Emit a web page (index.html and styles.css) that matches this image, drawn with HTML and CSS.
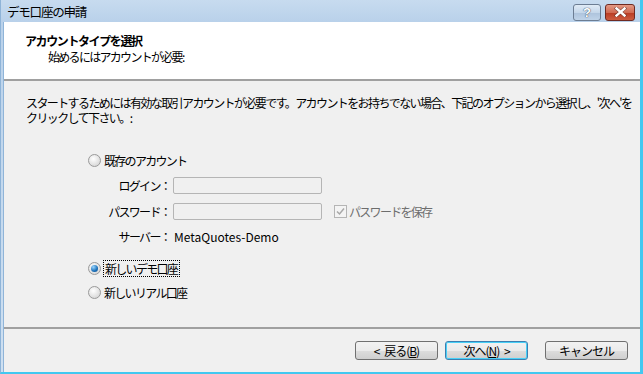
FILE: index.html
```html
<!DOCTYPE html>
<html lang="ja">
  <head>
    <meta charset="utf-8">
    <title>デモ口座の申請</title>
    <link rel="stylesheet" href="styles.css">
  </head>
  <body>
    <div class="window">
      <div class="titlebar">
        <span class="title">デモ口座の申請</span>
        <div class="caption-buttons">
          <button class="cap cap-help">?</button>
          <button class="cap cap-close">
            <svg width="13" height="10" viewBox="0 0 13 10">
              <path d="M2.5 1.5 L10.5 8.5 M10.5 1.5 L2.5 8.5" stroke="#4a2a26" stroke-width="3.6" stroke-linecap="square" fill="none" opacity="0.6"/>
              <path d="M2.5 1.5 L10.5 8.5 M10.5 1.5 L2.5 8.5" stroke="#fff" stroke-width="2.4" stroke-linecap="square" fill="none"/>
            </svg>
          </button>
        </div>
      </div>

      <div class="client">
        <div class="header">
          <div class="header-title">アカウントタイプを選択</div>
          <div class="header-sub">始めるにはアカウントが必要:</div>
        </div>

        <div class="body">
          <p class="intro">スタートするためには有効な取引アカウントが必要です。アカウントをお持ちでない場合、下記のオプションから選択し、'次へ'を</p>
          <p class="intro">クリックして下さい。:</p>

          <div class="options">
            <label class="radio"><span class="dot"></span>既存のアカウント</label>

            <div class="fields">
              <div class="field-label">ログイン：</div>
              <div class="input"></div>
              <div></div>

              <div class="field-label">パスワード：</div>
              <div class="input"></div>
              <label class="check"><span class="box">
                <svg width="9" height="9" viewBox="0 0 9 9"><path d="M1 4.5 L3.5 7 L8 1.5" stroke="#a8a8a8" stroke-width="1.5" fill="none"/></svg>
              </span>パスワードを保存</label>

              <div class="field-label">サーバー：</div>
              <div class="server">MetaQuotes-Demo</div>
              <div></div>
            </div>

            <label class="radio radio-demo"><span class="dot on"></span><span class="focus">新しいデモ口座</span></label>
            <label class="radio"><span class="dot"></span>新しいリアル口座</label>
          </div>
        </div>

        <div class="footer">
          <button class="btn">&lt; 戻る(<u>B</u>)</button>
          <button class="btn btn-default">次へ(<u>N</u>) &gt;</button>
          <button class="btn btn-cancel">キャンセル</button>
        </div>
      </div>
    </div>
  </body>
</html>
```

FILE: styles.css
```css
*,
*::before,
*::after {
  box-sizing: border-box;
}

* {
  margin: 0;
}

html, body {
  width: 643px;
  height: 374px;
  overflow: hidden;
}

body {
  font-family: "Noto Sans CJK JP", "Liberation Sans", sans-serif;
  font-size: 12px;
  line-height: 15px;
  letter-spacing: -1.7px;
  color: #000;
  background: #42c8f0;
}

.window {
  width: 643px;
  height: 374px;
  display: flex;
  flex-direction: column;
  background: linear-gradient(#b9d1ea, #cfe0f1);
  border-left: 1px solid #8fb4d8;
  border-right: 3px solid #42c8f0;
  border-bottom: 2px solid #42c8f0;
}

.titlebar {
  height: 22px;
  display: flex;
  align-items: center;
  justify-content: space-between;
  padding: 0 5px 0 6px;
  background: linear-gradient(#c7dbef, #b9d1ea);
}

.title {
  font-size: 12.5px;
  letter-spacing: -1.2px;
  color: #000;
  padding-top: 1px;
}

.caption-buttons {
  display: flex;
  gap: 4px;
  padding-top: 2px;
}

.cap {
  height: 17px;
  border-radius: 3px;
  border: 1px solid #6c7d93;
  padding: 0;
  display: flex;
  align-items: center;
  justify-content: center;
  font-family: "Liberation Sans", sans-serif;
  font-weight: bold;
  letter-spacing: 0;
}

.cap-help {
  width: 28px;
  background: linear-gradient(#e0ebf6 0%, #c5d7ea 50%, #adc3dc 51%, #bfd3e8 100%);
  color: #fff;
  font-size: 13px;
  text-shadow: 0 0 1px #3a4a60, 0 0 1px #3a4a60;
}

.cap-close {
  width: 30px;
  border-color: #6e2a22;
  background: linear-gradient(#e49a86 0%, #d06a52 50%, #b93a22 51%, #cc5c40 100%);
}

.client {
  flex: 1;
  display: flex;
  flex-direction: column;
  margin: 0 0 0 2px;
  background: #f0f0f0;
  border-left: 1px solid #8fb4d8;
}

.header {
  height: 59px;
  background: #fff;
  border-bottom: 2px solid #a0a0a0;
  padding: 11px 0 0 21px;
}

.header-title {
  font-weight: bold;
  letter-spacing: -1.4px;
}

.header-sub {
  padding-left: 23px;
  margin-top: 1px;
}

.body {
  flex: 1;
  padding: 15px 0 0 22px;
  border-bottom: 2px solid #a0a0a0;
}

.intro {
  height: 15px;
  line-height: 14px;
  letter-spacing: -1.6px;
  white-space: nowrap;
}

.options {
  padding: 26px 0 0 62px;
  display: flex;
  flex-direction: column;
}

.radio {
  display: flex;
  align-items: center;
  gap: 3px;
  height: 16px;
}

.dot {
  width: 13px;
  height: 13px;
  border-radius: 50%;
  border: 1px solid #9a9a9a;
  background: radial-gradient(circle at 40% 35%, #ffffff, #dcdcdc 70%, #cfcfcf);
  display: flex;
  align-items: center;
  justify-content: center;
}

.dot.on::after {
  content: "";
  width: 7px;
  height: 7px;
  border-radius: 50%;
  background: radial-gradient(circle at 35% 30%, #9ad6ff, #1a6fb8 60%, #0c4a8a);
}

.focus {
  outline: 1px dotted #000;
  outline-offset: 0;
  padding: 0 2px 0 1px;
}

.fields {
  display: grid;
  grid-template-columns: 80px 148px auto;
  column-gap: 6px;
  row-gap: 9px;
  align-items: center;
  margin: 9px 0 16px 0;
}

.field-label {
  text-align: right;
  margin-right: -2px;
}

.input {
  height: 17px;
  border: 1px solid #b5b5b5;
  border-radius: 2px;
  background: #f0f0f0;
  margin-left: -1px;
}

.check {
  display: flex;
  align-items: center;
  gap: 2px;
  color: #6d6d6d;
  margin-left: 6px;
}

.box {
  width: 13px;
  height: 13px;
  border: 1px solid #b5b5b5;
  background: #f4f4f4;
  display: flex;
  align-items: center;
  justify-content: center;
}

.server {
  margin-left: 0;
  letter-spacing: 0;
}

.radio-demo {
  margin-bottom: 8px;
}

.footer {
  height: 43px;
  display: flex;
  align-items: center;
  padding: 0 0 0 351px;
  gap: 7px;
}

.btn {
  width: 83px;
  height: 19px;
  padding: 0;
  font-family: "Noto Sans CJK JP", "Liberation Sans", sans-serif;
  font-size: 12px;
  line-height: 15px;
  letter-spacing: -1px;
  word-spacing: 3px;
  color: #000;
  border: 1px solid #707070;
  border-radius: 3px;
  background: linear-gradient(#f2f2f2 0%, #ebebeb 50%, #dddddd 51%, #cfcfcf 100%);
}

.btn-default {
  border-color: #3c7fb1;
  box-shadow: inset 0 0 0 1px #48d0f7;
}

.btn-cancel {
  margin-left: 10px;
}
```
